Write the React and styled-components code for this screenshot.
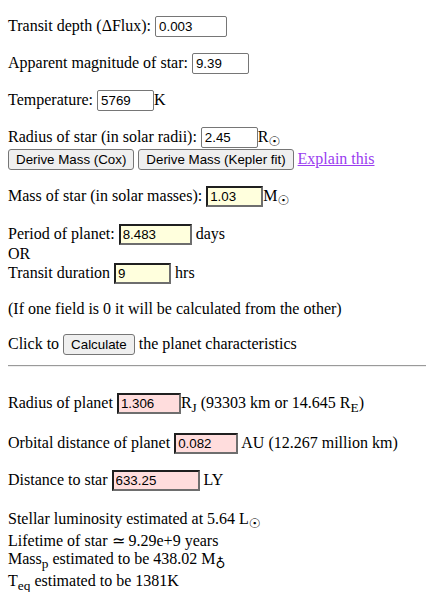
import React from "react";
import styled, { createGlobalStyle } from "styled-components";

const GlobalStyle = createGlobalStyle`
  body {
    margin: 0;
    font-family: "Liberation Serif", "Times New Roman", serif;
    font-size: 16px;
    color: #000;
    background: #fff;
  }
`;

const Page = styled.div`
  padding: 16px 0 0 8px;
`;

const Para = styled.p`
  margin: ${(p) => p.$top ?? 16}px 8px ${(p) => (p.$tight ? 8 : 16)}px 0;

  &:first-child {
    margin-top: 0;
  }
`;

const tones = {
  plain: "#fff",
  input: "#ffffdd",
  output: "#ffdddd",
};

const Field = styled.input`
  box-sizing: border-box;
  width: ${(p) => p.$w}px;
  height: 21px;
  margin: 0;
  padding: ${(p) => (p.$tone === "plain" ? "2px 3px" : "1px 2px")};
  font-family: "Liberation Sans", Arial, sans-serif;
  font-size: 13.333px;
  color: #000;
  background: ${(p) => tones[p.$tone]};
  border-radius: ${(p) => (p.$tone === "plain" ? "2px" : "0")};
  border-style: solid;
  border-width: ${(p) => (p.$tone === "plain" ? "1px" : "2px")};
  border-color: ${(p) =>
    p.$tone === "plain" ? "#767676" : "#1f1f1f #6e6e6e #6e6e6e #1f1f1f"};
  vertical-align: baseline;
  outline: none;
`;

const Button = styled.button`
  box-sizing: border-box;
  height: 21px;
  margin: 0;
  padding: 1px 7px;
  font-family: "Liberation Sans", Arial, sans-serif;
  font-size: 13.333px;
  color: #000;
  background: #efefef;
  border: 1px solid #767676;
  border-radius: 3px;
`;

const Link = styled.a`
  color: #9a3cf0;
  text-decoration: underline;
  cursor: pointer;
`;

const Sym = styled.sub`
  font-family: "DejaVu Sans", sans-serif;
`;

const Rule = styled.hr`
  margin: 10px 0 26px 0;
  border: none;
  border-top: 1px solid #9a9a9a;
  border-bottom: 1px solid #eeeeee;
  height: 0;
`;

const Row = ({ label, children }) => (
  <Para>
    {label} {children}
  </Para>
);

export default function App() {
  return (
    <Page>
      <GlobalStyle />
      <Row label="Transit depth (ΔFlux):">
        <Field $w={72} $tone="plain" defaultValue="0.003" />
      </Row>
      <Row label="Apparent magnitude of star:">
        <Field $w={57} $tone="plain" defaultValue="9.39" />
      </Row>
      <Row label="Temperature:">
        <Field $w={57} $tone="plain" defaultValue="5769" />K
      </Row>
      <Para>
        Radius of star (in solar radii): <Field $w={57} $tone="plain" defaultValue="2.45" />
        R<Sym>☉</Sym>
        <br />
        <Button>Derive Mass (Cox)</Button> <Button>Derive Mass (Kepler fit)</Button>{" "}
        <Link>Explain this</Link>
      </Para>
      <Para>
        Mass of star (in solar masses): <Field $w={57} $tone="input" defaultValue="1.03" />
        M<Sym>☉</Sym>
      </Para>
      <Para>
        Period of planet: <Field $w={73} $tone="input" defaultValue="8.483" /> days
        <br />
        OR
        <br />
        Transit duration <Field $w={57} $tone="input" defaultValue="9" /> hrs
      </Para>
      <Para>(If one field is 0 it will be calculated from the other)</Para>
      <Para $tight>
        Click to <Button>Calculate</Button> the planet characteristics
      </Para>
      <Rule />
      <Para>
        Radius of planet <Field $w={64} $tone="output" defaultValue="1.306" />
        R<sub>J</sub> (93303 km or 14.645 R<sub>E</sub>)
      </Para>
      <Para>
        Orbital distance of planet <Field $w={64} $tone="output" defaultValue="0.082" /> AU
        (12.267 million km)
      </Para>
      <Para>
        Distance to star <Field $w={88} $tone="output" defaultValue="633.25" /> LY
      </Para>
      <Para $top={19}>
        Stellar luminosity estimated at 5.64 L<Sym>☉</Sym>
        <br />
        Lifetime of star ≃ 9.29e+9 years
        <br />
        Mass<sub>p</sub> estimated to be 438.02 M<Sym>♁</Sym>
        <br />
        T<sub>eq</sub> estimated to be 1381K
      </Para>
    </Page>
  );
}
